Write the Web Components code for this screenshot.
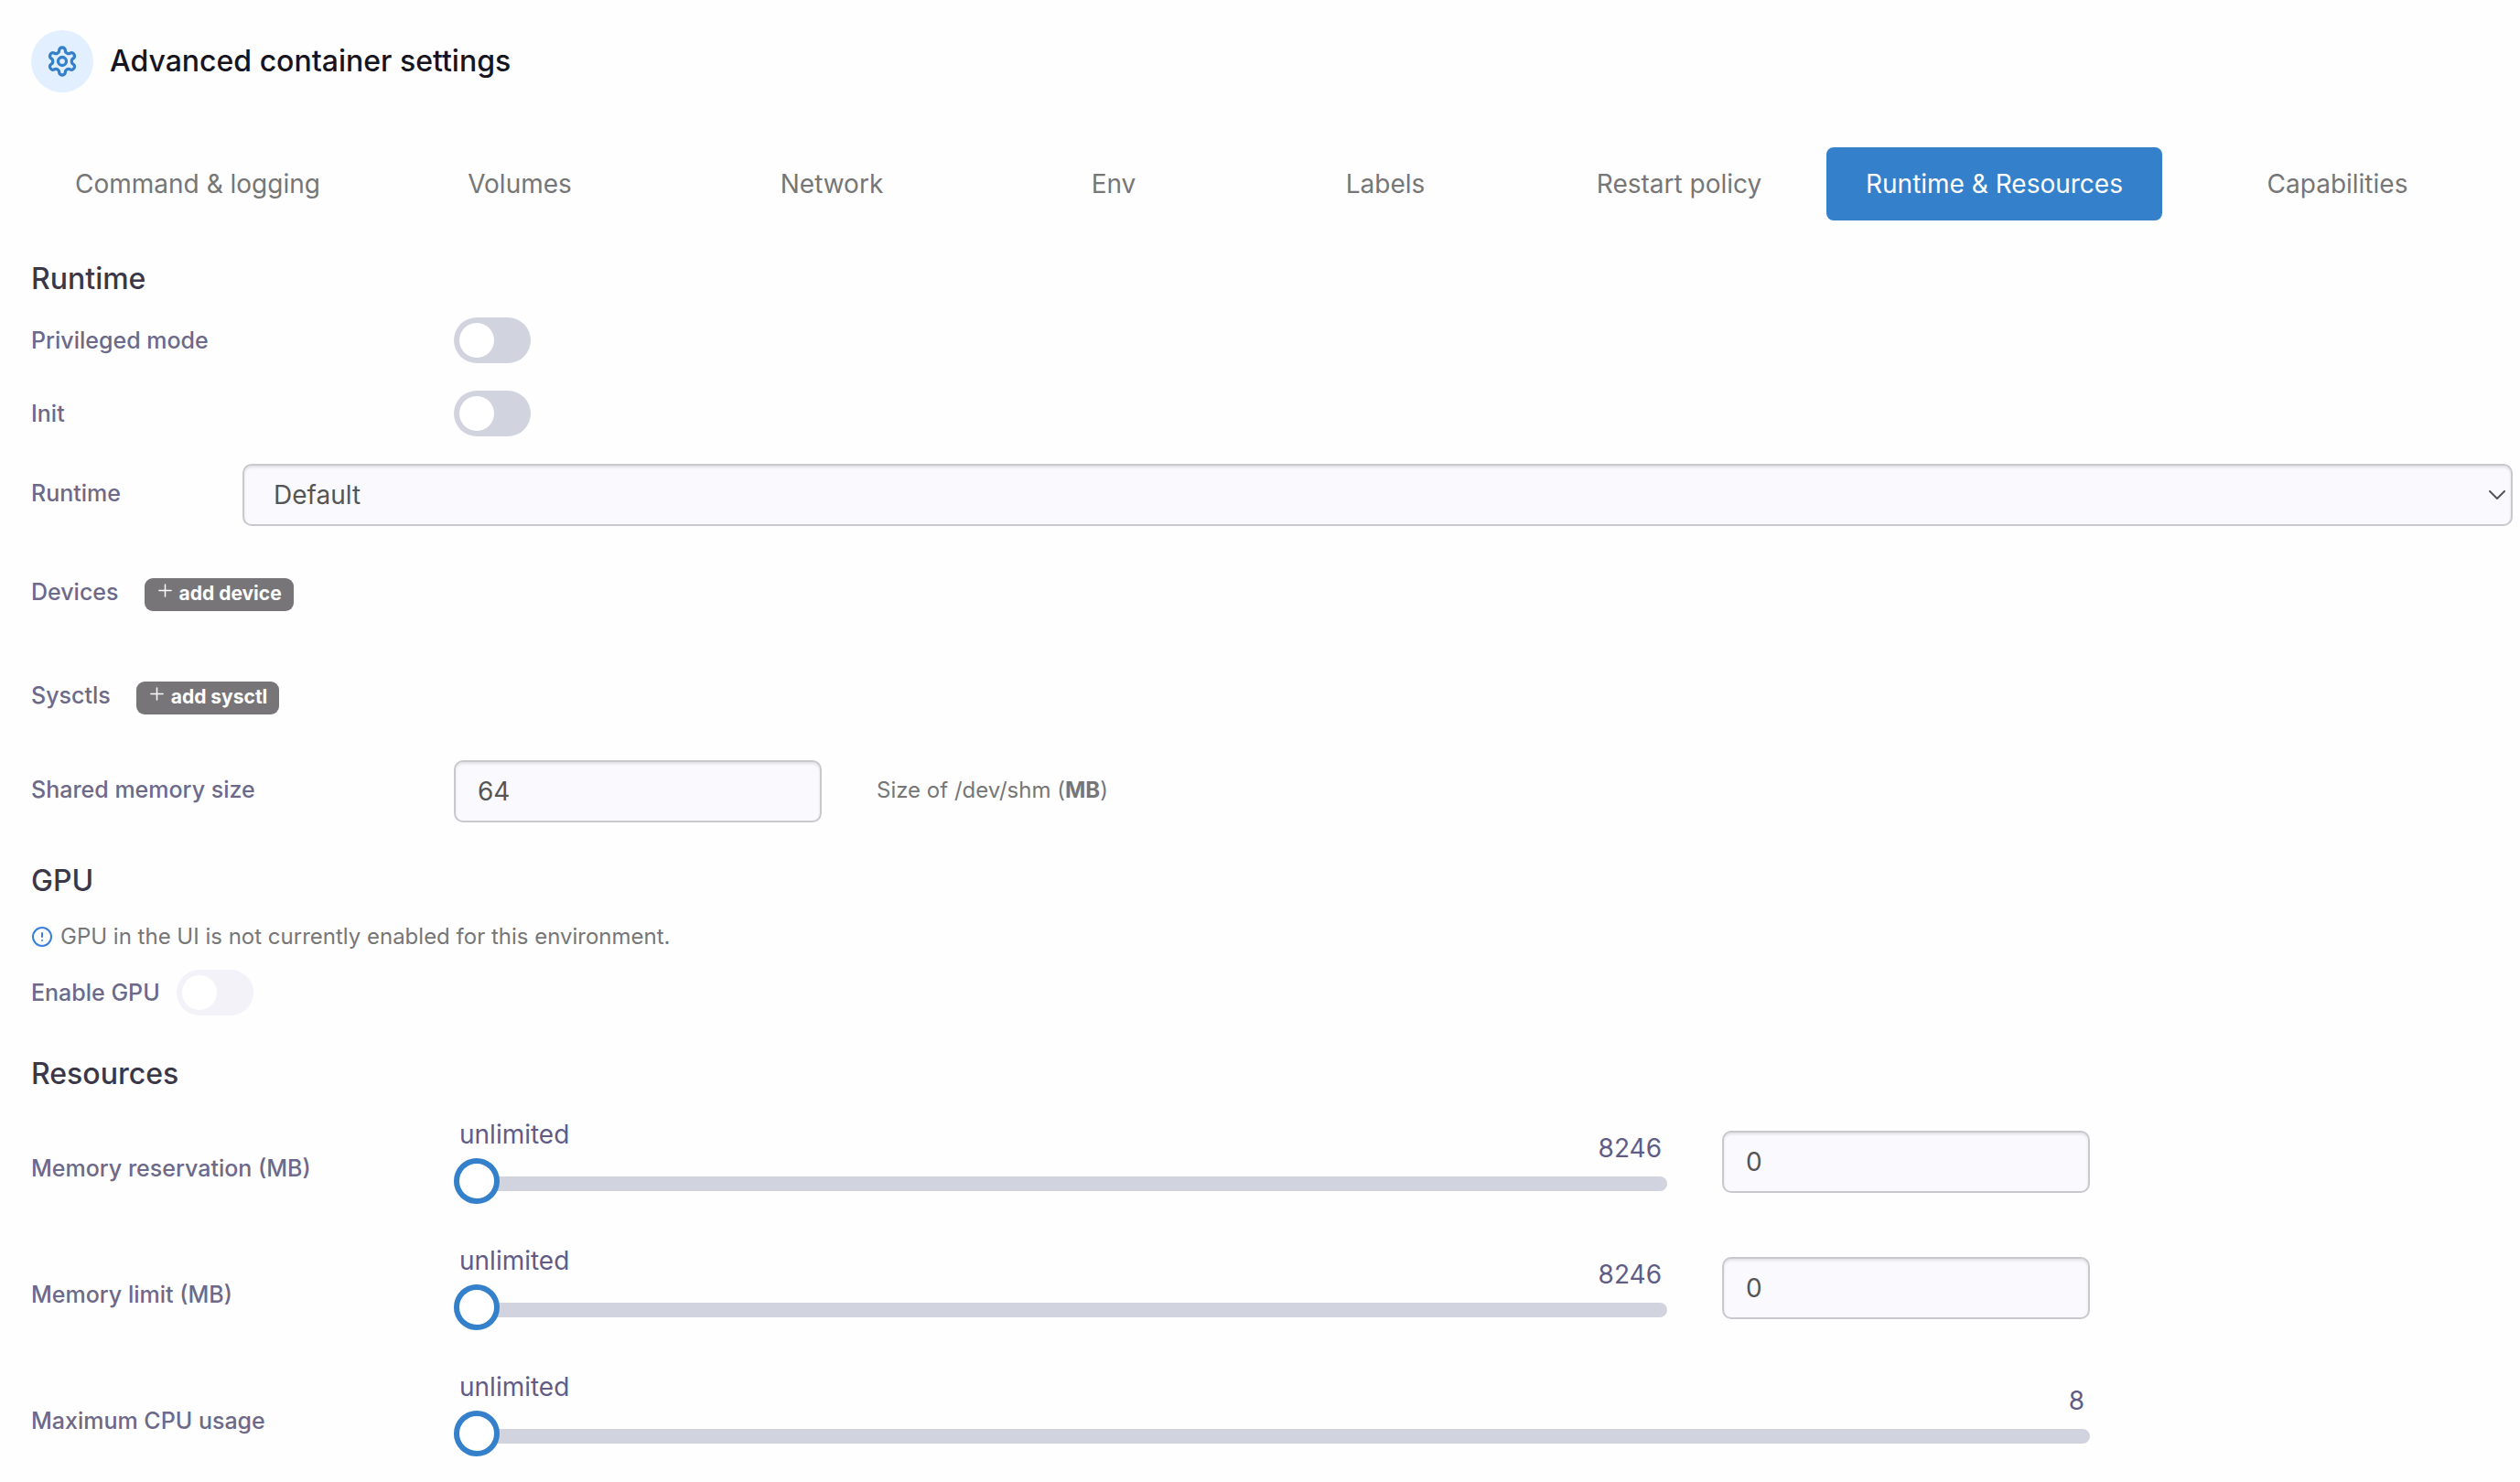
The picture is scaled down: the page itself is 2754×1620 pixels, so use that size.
<!DOCTYPE html>
<html lang="en">
<head>
<meta charset="utf-8">
<meta name="viewport" content="width=device-width, initial-scale=1">
<title>Advanced container settings</title>
<style>
  body {
    margin: 0;
    background: #fefefe;
    font-family: Inter, "Liberation Sans", sans-serif;
    --blue: #3480cb;
    --label: #6c6989;
    --muted: #767676;
    --track: #d1d4de;
    --border: #c9c8cc;
    --field: #f9f9fe;
  }
</style>
</head>
<body>
<container-settings></container-settings>

<script>
/* 12 column row shared by all the form fields */
const rowStyles = /* css */ `
  :host { display: block; }
  * { box-sizing: border-box; }

  .row {
    display: grid;
    grid-template-columns: repeat(12, minmax(0, 1fr));
    column-gap: 60px;
    align-items: center;
  }

  label, .label {
    color: var(--label);
    font-size: 25px;
    font-weight: 500;
    line-height: 34px;
    white-space: nowrap;
  }

  .control {
    width: 100%;
    height: 68px;
    margin: 0;
    border: 2px solid var(--border);
    border-radius: 10px;
    background: var(--field);
    box-shadow: inset 0 2px 3px rgba(0, 0, 0, 0.1);
    color: #555;
    font: 400 28px Inter, "Liberation Sans", sans-serif;
    appearance: none;
  }

  input.control {
    padding: 0 24px;
    appearance: textfield;
  }
`;

class SettingsHeader extends HTMLElement {
  constructor() {
    super();
    this.attachShadow({ mode: 'open' });
  }

  connectedCallback() {
    this.shadowRoot.innerHTML = /* html */ `
    <style>
      :host {
        display: flex;
        align-items: center;
        gap: 18px;
      }
      .icon {
        display: flex;
        align-items: center;
        justify-content: center;
        width: 68px;
        height: 68px;
        border-radius: 50%;
        background: #e2efff;
        color: var(--blue);
      }
      h1 {
        margin: 0;
        color: #16141f;
        font-size: 32px;
        font-weight: 500;
        line-height: 40px;
      }
    </style>
    <span class="icon">
      <svg width="36" height="36" viewBox="0 0 24 24" fill="none" stroke="currentColor" stroke-width="2.2" stroke-linecap="round" stroke-linejoin="round" aria-hidden="true">
        <path d="M12.22 2h-.44a2 2 0 0 0-2 2v.18a2 2 0 0 1-1 1.73l-.43.25a2 2 0 0 1-2 0l-.15-.08a2 2 0 0 0-2.73.73l-.22.38a2 2 0 0 0 .73 2.73l.15.1a2 2 0 0 1 1 1.72v.51a2 2 0 0 1-1 1.74l-.15.09a2 2 0 0 0-.73 2.73l.22.38a2 2 0 0 0 2.73.73l.15-.08a2 2 0 0 1 2 0l.43.25a2 2 0 0 1 1 1.73V20a2 2 0 0 0 2 2h.44a2 2 0 0 0 2-2v-.18a2 2 0 0 1 1-1.73l.43-.25a2 2 0 0 1 2 0l.15.08a2 2 0 0 0 2.73-.73l.22-.39a2 2 0 0 0-.73-2.73l-.15-.08a2 2 0 0 1-1-1.74v-.5a2 2 0 0 1 1-1.74l.15-.09a2 2 0 0 0 .73-2.73l-.22-.38a2 2 0 0 0-2.73-.73l-.15.08a2 2 0 0 1-2 0l-.43-.25a2 2 0 0 1-1-1.73V4a2 2 0 0 0-2-2z"/>
        <circle cx="12" cy="12" r="3"/>
      </svg>
    </span>
    <h1><slot></slot></h1>`;
  }
}

class SettingsTabs extends HTMLElement {
  constructor() {
    super();
    this.attachShadow({ mode: 'open' });
    this.tabs = [
      'Command & logging',
      'Volumes',
      'Network',
      'Env',
      'Labels',
      'Restart policy',
      'Runtime & Resources',
      'Capabilities',
    ];
    this.active = 'Runtime & Resources';
  }

  connectedCallback() {
    const items = this.tabs.map((tab) => {
      const current = tab === this.active ? 'aria-current="page"' : '';
      return `<a href="#" ${current}>${tab.replace('&', '&amp;')}</a>`;
    }).join('');

    this.shadowRoot.innerHTML = /* html */ `
    <style>
      :host { display: block; }
      nav {
        display: grid;
        grid-template-columns: 364fr 332fr 342fr 266fr 320fr 314fr 367fr 375fr;
        column-gap: 4px;
        padding-right: 4px;
      }
      a {
        border-radius: 8px;
        color: var(--muted);
        font-size: 28px;
        line-height: 80px;
        text-align: center;
        text-decoration: none;
        white-space: nowrap;
      }
      a[aria-current] {
        background: var(--blue);
        color: #fff;
      }
    </style>
    <nav>${items}</nav>`;
  }
}

class SettingsSection extends HTMLElement {
  constructor() {
    super();
    this.attachShadow({ mode: 'open' });
  }

  connectedCallback() {
    this.shadowRoot.innerHTML = /* html */ `
    <style>
      :host { display: block; margin-top: 44px; }
      h2 {
        margin: 0 0 22px;
        color: #3a3848;
        font-size: 32px;
        font-weight: 500;
        line-height: 40px;
      }
    </style>
    <section>
      <h2>${this.getAttribute('heading')}</h2>
      <slot></slot>
    </section>`;
  }
}

class ToggleField extends HTMLElement {
  constructor() {
    super();
    this.attachShadow({ mode: 'open' });
  }

  connectedCallback() {
    const disabled = this.hasAttribute('disabled') ? 'disabled' : '';
    this.shadowRoot.innerHTML = /* html */ `
    <style>
      ${rowStyles}
      label { grid-column: span 2; }
      input {
        width: 84px;
        height: 50px;
        margin: 0;
        padding: 6px;
        border-radius: 25px;
        background: var(--track);
        appearance: none;
      }
      input::before {
        content: "";
        display: block;
        width: 38px;
        height: 38px;
        border-radius: 50%;
        background: #fff;
      }
      input:checked { background: var(--blue); }
      input:checked::before { margin-left: 34px; }
      input:disabled { background: #f3f2f9; }
      :host([inline]) .row {
        display: flex;
        gap: 18px;
      }
    </style>
    <div class="row">
      <label for="toggle">${this.getAttribute('label')}</label>
      <input id="toggle" type="checkbox" role="switch" ${disabled}>
    </div>`;
  }
}

class SelectField extends HTMLElement {
  constructor() {
    super();
    this.attachShadow({ mode: 'open' });
  }

  connectedCallback() {
    this.shadowRoot.innerHTML = /* html */ `
    <style>
      ${rowStyles}
      label { padding-bottom: 4px; }
      .select {
        display: grid;
        grid-column: span 11;
        align-items: center;
      }
      select, svg { grid-area: 1 / 1; }
      select { padding: 0 32px; }
      svg {
        justify-self: end;
        margin-right: 8px;
        pointer-events: none;
      }
    </style>
    <div class="row">
      <label for="select">${this.getAttribute('label')}</label>
      <div class="select">
        <select id="select" class="control">
          <option>${this.getAttribute('value')}</option>
        </select>
        <svg width="18" height="10" viewBox="0 0 18 10" fill="none" stroke="#555" stroke-width="2" stroke-linecap="round" stroke-linejoin="round" aria-hidden="true">
          <path d="M1 1l8 8 8-8"/>
        </svg>
      </div>
    </div>`;
  }
}

class ListField extends HTMLElement {
  constructor() {
    super();
    this.attachShadow({ mode: 'open' });
  }

  connectedCallback() {
    this.shadowRoot.innerHTML = /* html */ `
    <style>
      ${rowStyles}
      .row {
        display: flex;
        gap: 28px;
        height: 36px;
      }
      .label { padding-bottom: 6px; }
      button {
        display: flex;
        gap: 7px;
        height: 36px;
        padding: 0 13px 0 14px;
        border: 0;
        border-radius: 9px;
        background: #777578;
        color: #fff;
        font: 700 21px/34px Inter, "Liberation Sans", sans-serif;
      }
      svg { margin-top: 5px; }
    </style>
    <div class="row">
      <span class="label">${this.getAttribute('label')}</span>
      <button type="button">
        <svg width="17" height="17" viewBox="0 0 18 18" fill="none" stroke="currentColor" stroke-width="1.6" stroke-linecap="round" aria-hidden="true">
          <path d="M9 2v14M2 9h14"/>
        </svg>
        <slot></slot>
      </button>
    </div>`;
  }
}

class NumberField extends HTMLElement {
  constructor() {
    super();
    this.attachShadow({ mode: 'open' });
  }

  connectedCallback() {
    this.shadowRoot.innerHTML = /* html */ `
    <style>
      ${rowStyles}
      label { padding-bottom: 4px; }
      label, input { grid-column: span 2; }
      .hint {
        grid-column: span 8;
        padding-bottom: 2px;
        color: var(--muted);
        font-size: 24px;
        line-height: 34px;
      }
    </style>
    <div class="row">
      <label for="number">${this.getAttribute('label')}</label>
      <input id="number" class="control" type="number" value="${this.getAttribute('value')}">
      <span class="hint"><slot></slot></span>
    </div>`;
  }
}

class InfoNote extends HTMLElement {
  constructor() {
    super();
    this.attachShadow({ mode: 'open' });
  }

  connectedCallback() {
    this.shadowRoot.innerHTML = /* html */ `
    <style>
      :host {
        display: flex;
        align-items: center;
        gap: 8px;
        color: var(--muted);
        font-size: 24px;
        line-height: 34px;
      }
      svg { color: #3a7fdc; }
    </style>
    <svg width="24" height="24" viewBox="0 0 24 24" fill="none" stroke="currentColor" stroke-width="2" stroke-linecap="round" aria-hidden="true">
      <circle cx="12" cy="12" r="10"/>
      <path d="M12 8v4M12 16h.01"/>
    </svg>
    <span><slot></slot></span>`;
  }
}

class SliderField extends HTMLElement {
  constructor() {
    super();
    this.attachShadow({ mode: 'open' });
  }

  connectedCallback() {
    const label = this.getAttribute('label');
    const max = this.getAttribute('max');
    const number = this.hasAttribute('number')
      ? `<input class="control" type="number" value="0" aria-label="${label}">`
      : '';

    this.shadowRoot.innerHTML = /* html */ `
    <style>
      ${rowStyles}
      label {
        grid-column: span 2;
        padding-top: 14px;
      }
      .slider { grid-column: span ${number ? 6 : 8}; }
      .limits {
        display: flex;
        align-items: flex-end;
        justify-content: space-between;
        height: 42px;
        padding: 0 6px;
        color: #605c86;
        font-size: 28px;
        line-height: 22px;
      }
      .limits span:first-child { align-self: flex-start; line-height: 32px; }
      input[type="range"] {
        display: block;
        width: 100%;
        height: 50px;
        margin: 0;
        background: none;
        appearance: none;
      }
      input[type="range"]::-webkit-slider-runnable-track {
        height: 16px;
        margin-top: 6px;
        border-radius: 8px;
        background: var(--track);
      }
      input[type="range"]::-webkit-slider-thumb {
        width: 50px;
        height: 50px;
        margin-top: -20px;
        border: 6px solid var(--blue);
        border-radius: 50%;
        background: #fff;
        box-sizing: border-box;
        appearance: none;
      }
      input[type="number"] { grid-column: span 2; }
    </style>
    <div class="row">
      <label for="range">${label}</label>
      <div class="slider">
        <div class="limits"><span>unlimited</span><span>${max}</span></div>
        <input id="range" type="range" min="0" max="${max}" value="0">
      </div>
      ${number}
    </div>`;
  }
}

class ContainerSettings extends HTMLElement {
  constructor() {
    super();
    this.attachShadow({ mode: 'open' });
  }

  connectedCallback() {
    this.shadowRoot.innerHTML = /* html */ `
    <style>
      :host {
        display: block;
        padding: 33px 8px 0 34px;
      }
      settings-tabs { margin-top: 60px; }
      toggle-field + toggle-field, select-field { margin-top: 30px; }
      list-field { margin-top: 57px; }
      list-field + list-field { margin-top: 77px; }
      number-field { margin-top: 50px; }
      info-note { margin-top: 24px; }
      info-note + toggle-field { margin-top: 19px; }
      slider-field { margin-top: 30px; }
      slider-field + slider-field { margin-top: 46px; }
    </style>
    <settings-header>Advanced container settings</settings-header>
    <settings-tabs></settings-tabs>

    <settings-section heading="Runtime">
      <toggle-field label="Privileged mode"></toggle-field>
      <toggle-field label="Init"></toggle-field>
      <select-field label="Runtime" value="Default"></select-field>
      <list-field label="Devices">add device</list-field>
      <list-field label="Sysctls">add sysctl</list-field>
      <number-field label="Shared memory size" value="64">Size of /dev/shm (<b>MB</b>)</number-field>
    </settings-section>

    <settings-section heading="GPU">
      <info-note>GPU in the UI is not currently enabled for this environment.</info-note>
      <toggle-field label="Enable GPU" inline disabled></toggle-field>
    </settings-section>

    <settings-section heading="Resources">
      <slider-field label="Memory reservation (MB)" max="8246" number></slider-field>
      <slider-field label="Memory limit (MB)" max="8246" number></slider-field>
      <slider-field label="Maximum CPU usage" max="8"></slider-field>
    </settings-section>`;
  }
}

customElements.define('settings-header', SettingsHeader);
customElements.define('settings-tabs', SettingsTabs);
customElements.define('settings-section', SettingsSection);
customElements.define('toggle-field', ToggleField);
customElements.define('select-field', SelectField);
customElements.define('list-field', ListField);
customElements.define('number-field', NumberField);
customElements.define('info-note', InfoNote);
customElements.define('slider-field', SliderField);
customElements.define('container-settings', ContainerSettings);
</script>
</body>
</html>
